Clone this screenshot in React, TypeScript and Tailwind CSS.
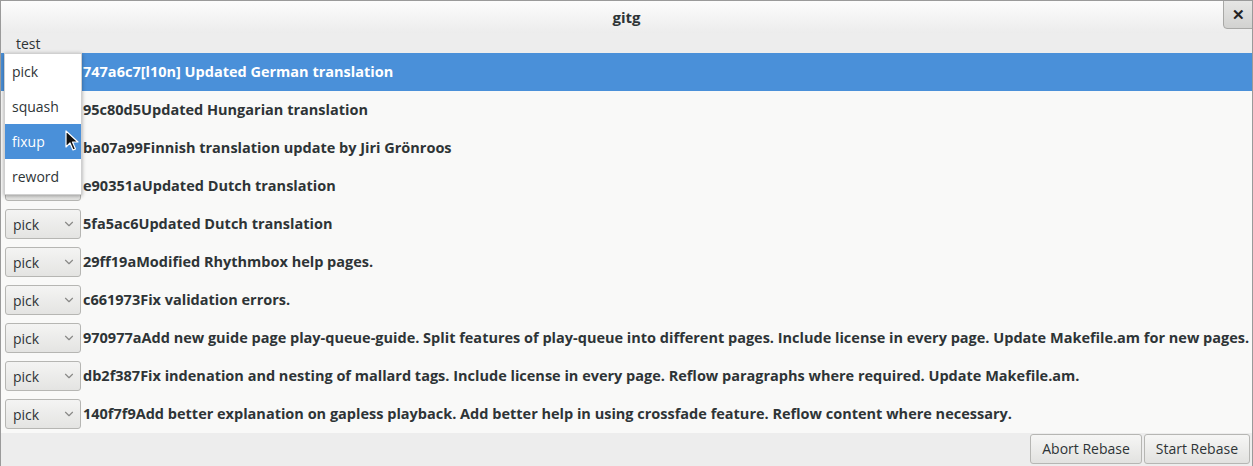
import { ChevronDown } from "lucide-react";

const commits = [
  "747a6c7[l10n] Updated German translation",
  "95c80d5Updated Hungarian translation",
  "ba07a99Finnish translation update by Jiri Grönroos",
  "e90351aUpdated Dutch translation",
  "5fa5ac6Updated Dutch translation",
  "29ff19aModified Rhythmbox help pages.",
  "c661973Fix validation errors.",
  "970977aAdd new guide page play-queue-guide. Split features of play-queue into different pages. Include license in every page. Update Makefile.am for new pages.",
  "db2f387Fix indenation and nesting of mallard tags. Include license in every page. Reflow paragraphs where required. Update Makefile.am.",
  "140f7f9Add better explanation on gapless playback. Add better help in using crossfade feature. Reflow content where necessary.",
];

const menuItems = ["pick", "squash", "fixup", "reword"];

// rows under the open popup: combos hidden, except the bottom edge of row 4
const Combo = ({ covered, hideLabel }: { covered?: boolean; hideLabel?: boolean }) => (
  <div
    className={
      (covered ? "invisible " : "") +
      "flex items-center justify-between w-[76px] h-[30px] shrink-0 rounded-[3px] border border-[#b6b6b3] bg-gradient-to-b from-[#f4f4f3] to-[#e4e4e2] pl-[7px] pr-[4px] text-[14px] text-[#2e3436] font-normal"
    }
  >
    <span className={hideLabel ? "invisible" : ""}>pick</span>
    <ChevronDown className={hideLabel ? "invisible w-[14px] h-[14px]" : "w-[14px] h-[14px] text-[#8a8a88]"} strokeWidth={2} />
  </div>
);

const Cursor = () => (
  <svg className="absolute left-[64px] top-[129px]" width="16" height="22" viewBox="0 0 16 22">
    <path d="M1 1 L1 17 L5 13 L8 20 L10.5 19 L7.5 12 L13 12 Z" fill="#111" stroke="#fff" strokeWidth="1.2" strokeLinejoin="round" />
  </svg>
);

export default function App() {
  return (
    <div className="relative w-[1253px] h-[466px] overflow-hidden bg-[#ededed] border-x border-t border-[#9a9a9a] text-[14px] text-[#2e3436] font-['Open_Sans',sans-serif] flex flex-col">
      <div className="relative h-[32px] shrink-0 flex items-center justify-center bg-gradient-to-b from-[#fcfcfc] to-[#ececec]">
        <span className="font-bold text-[15px] text-[#2e3436]">gitg</span>
        <div className="absolute right-[-1px] top-[-1px] w-[30px] h-[29px] flex items-center justify-center rounded-bl-[4px] border border-[#a8a8a6] bg-gradient-to-b from-[#e6e6e5] to-[#d2d2d0]">
          <span className="font-bold text-[15px] leading-none text-[#222]">✕</span>
        </div>
      </div>
      <div className="h-[20px] shrink-0 flex items-center pl-[15px] text-[14px]">test</div>
      <div className="flex-1 flex flex-col bg-[#f9f9f8]">
        {commits.map((c, i) => (
          <div
            key={i}
            className={
              i === 0
                ? "h-[38px] shrink-0 flex items-center gap-[2px] pl-[4px] bg-[#4a90d9] text-white font-bold text-[14.5px] whitespace-nowrap"
                : "h-[38px] shrink-0 flex items-center gap-[2px] pl-[4px] font-bold text-[14.5px] whitespace-nowrap"
            }
          >
            <Combo covered={i < 3} hideLabel={i === 3} />
            <span>{c}</span>
          </div>
        ))}
      </div>
      <div className="h-[33px] shrink-0 flex items-center justify-end gap-[2px] pr-[2px] pb-[2px] bg-[#ededed]">
        <button className="h-[30px] px-[11px] rounded-[3px] border border-[#b6b6b3] bg-gradient-to-b from-[#f6f6f5] to-[#e2e2e0] text-[14px]">Abort Rebase</button>
        <button className="h-[30px] px-[11px] rounded-[3px] border border-[#b6b6b3] bg-gradient-to-b from-[#f6f6f5] to-[#e2e2e0] text-[14px]">Start Rebase</button>
      </div>

      <div className="absolute left-[3px] top-[52px] w-[78px] flex flex-col bg-white shadow-[0_1px_4px_rgba(0,0,0,0.35)] border border-[#d0d0d0]">
        {menuItems.map((m) => (
          <div
            key={m}
            className={
              m === "fixup"
                ? "h-[35px] flex items-center pl-[7px] bg-[#4a90d9] text-white"
                : "h-[35px] flex items-center pl-[7px]"
            }
          >
            {m}
          </div>
        ))}
      </div>
      <Cursor />
    </div>
  );
}
